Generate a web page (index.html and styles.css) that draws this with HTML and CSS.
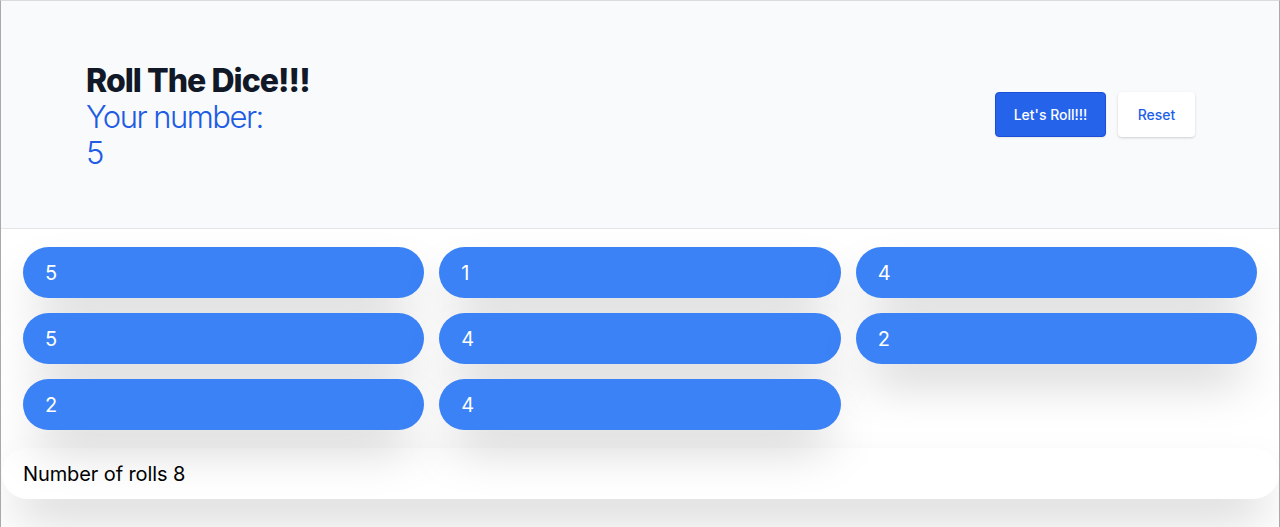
FILE: index.html
```html
<!DOCTYPE html>
<html lang="en">
<head>
<meta charset="utf-8">
<title>Roll The Dice</title>
<link rel="stylesheet" href="styles.css">
</head>
<body>
<div class="frame">
  <header class="hero">
    <h2 class="hero-title">
      <span class="title">Roll The Dice!!!</span>
      <span class="sub">Your number:</span>
      <span class="sub">5</span>
    </h2>
    <div class="actions">
      <button class="btn btn-primary">Let's Roll!!!</button>
      <button class="btn btn-secondary">Reset</button>
    </div>
  </header>
  <main class="rolls">
    <div class="roll">5</div>
    <div class="roll">1</div>
    <div class="roll">4</div>
    <div class="roll">5</div>
    <div class="roll">4</div>
    <div class="roll">2</div>
    <div class="roll">2</div>
    <div class="roll">4</div>
  </main>
  <div class="count">Number of rolls 8</div>
</div>
</body>
</html>
```
FILE: styles.css
```css
* { box-sizing: border-box; }
html, body { margin: 0; padding: 0; background: #fff; }
body {
  font-family: Inter, "Noto Sans", sans-serif;
  height: 527px;
  overflow: hidden;
}
.frame {
  height: 527px;
  border-left: 1px solid #a9a9a9;
  border-right: 1px solid #a9a9a9;
  border-top: 1px solid #dcdcdc;
  background: #fff;
  overflow: hidden;
}
.hero {
  height: 228px;
  background: #f9fafb;
  border-bottom: 1px solid #e3e5e8;
  display: flex;
  align-items: center;
  justify-content: space-between;
  padding: 0 84px 0 85px;
}
.hero-title {
  margin: 0;
  font-size: 32px;
  line-height: 36px;
  font-weight: 400;
  padding-top: 5px;
}
.hero-title span { display: block; }
.title { font-weight: 800; color: #111827; letter-spacing: -0.95px; }
.sub { color: #1d5ce3; font-size: 31px; font-weight: 350; letter-spacing: -1.5px; }
.actions { display: flex; gap: 12px; }
.btn {
  height: 45px;
  border-radius: 4px;
  font-family: Inter, "Noto Sans", sans-serif;
  font-size: 14px;
  font-weight: 500;
  cursor: pointer;
}
.btn-primary {
  width: 111px;
  background: #2563eb;
  color: #fff;
  border: 1px solid #1d4ed8;
  box-shadow: 0 1px 2px rgba(0,0,0,0.08);
}
.btn-secondary {
  width: 77px;
  background: #fff;
  color: #1d5fe6;
  border: none;
  box-shadow: 0 1px 3px rgba(0,0,0,0.12), 0 1px 2px rgba(0,0,0,0.06);
}
.rolls {
  display: grid;
  grid-template-columns: repeat(3, 1fr);
  column-gap: 15px;
  row-gap: 15px;
  padding: 18px 22px 18px 22px;
}
.roll {
  height: 51px;
  border-radius: 26px;
  background: #3b82f6;
  color: #fff;
  font-size: 20px;
  display: flex;
  align-items: center;
  padding-left: 22px;
  box-shadow: 0 25px 50px -12px rgba(0,0,0,0.25);
}
.count {
  margin-left: 1px;
  height: 51px;
  border-radius: 26px;
  background: #fff;
  color: #000;
  font-size: 20px;
  letter-spacing: -0.1px;
  display: flex;
  align-items: center;
  padding-left: 21px;
  box-shadow: 0 25px 50px -12px rgba(0,0,0,0.25);
}
```
